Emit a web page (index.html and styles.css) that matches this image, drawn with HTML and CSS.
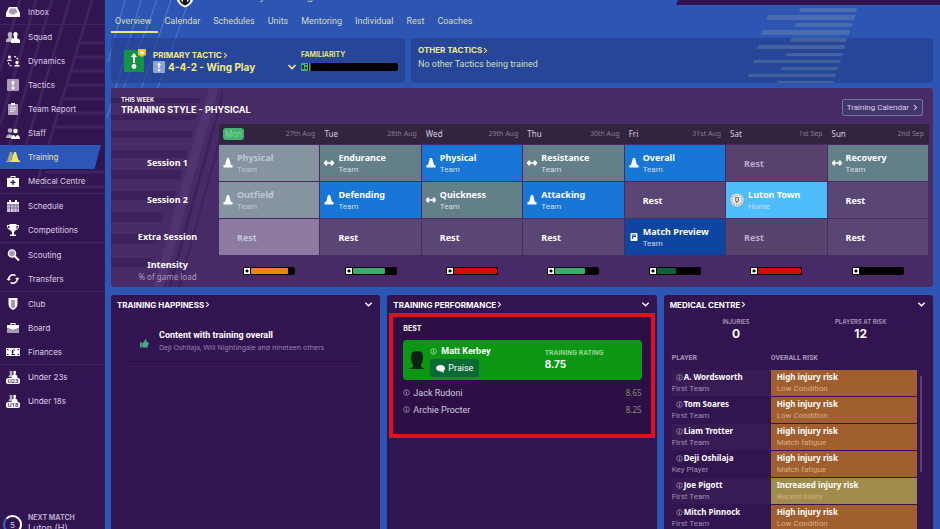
FILE: index.html
```html
<!DOCTYPE html>
<html lang="en">
<head>
<meta charset="utf-8">
<title>Training overview</title>
<link rel="stylesheet" href="styles.css">
</head>
<body>
<svg class="defs" aria-hidden="true">
  <symbol id="cone" viewBox="0 0 10 10"><path d="M4 0h2l2 7h1.500v2.500h-9V7H2z"/></symbol>
  <symbol id="bell" viewBox="0 0 10 10"><path d="M0 4.200 1 3.500 1.500 2.500h1.700v1.800h3.600V2.500h1.700L9 3.500l1 .7v1.600l-1 .7-.5 1H6.800V5.700H3.200v1.800H1.500L1 6.500 0 5.800z"/></symbol>
  <symbol id="note" viewBox="0 0 10 10"><path fill-rule="evenodd" d="M2.500 1h5q1 0 1 1v6q0 1-1 1h-5q-1 0-1-1V2q0-1 1-1zM3 2.500v1h4v-1zM3 4v3h1V5h3V4z"/></symbol>
  <symbol id="info" viewBox="0 0 10 10"><circle cx="5" cy="5" r="4" fill="none" stroke="currentColor" stroke-width="1.300"/><path d="M4.200 2h1.600v1.300H4.200zM4.200 4h1.600v4H4.200z"/></symbol>
  <symbol id="down" viewBox="0 0 10 10"><path d="M1.500 3 5 6.500 8.500 3" fill="none" stroke="currentColor" stroke-width="1.600"/></symbol>
  <symbol id="right" viewBox="0 0 6 10"><path d="M1 1.500 4.500 5 1 8.500" fill="none" stroke="currentColor" stroke-width="1.500"/></symbol>
  <symbol id="people" viewBox="0 0 14 12"><path opacity=".65" d="M4 1c2 0 2.500 1.500 2 3.500L5.500 6 7 7v4H0V9c0-1 2-1.500 2.500-2V6C1 4 1.500 1 4 1z"/><path d="M9.500 1c2 0 2.500 2 2 3.500L11 6v1c.5.500 3 1 3 2.500V12H5V9.500C5 8 7.500 7.500 8 7V6L7.500 4.500C7 3 7.500 1 9.500 1z"/></symbol>
</svg>
<div class="app">
  <aside class="sidebar">
    <svg class="lines" viewBox="0 0 104 260" preserveAspectRatio="none" aria-hidden="true">
      <path d="M20 0 0 70M36 0 0 125M52 0 5 160M70 0 20 165M92 0 38 180M79 43h25M75 57h29M70 71h34M66 85h38M60 99h44M56 113h48M52 127h52M45 172h59M40 187h64"/>
    </svg>
    <nav>
      <ul>
        <li><a href="#"><svg viewBox="0 0 14 12"><path d="M3 1h8l3 6v4H0V7z"/><path fill="#a898b8" d="M4 2.500h6l1.500 4.500h-2L9 8.500H5L4.500 7h-2z"/></svg>Inbox</a></li>
      </ul>
      <ul>
        <li><a href="#"><svg viewBox="0 0 14 12"><use href="#people"/></svg>Squad</a></li>
        <li><a href="#"><svg viewBox="0 0 14 12"><circle cx="3.500" cy="2" r="1.600"/><path d="M1 6c0-2 5-2 5 0zM8 11.500c0-2.500 6-2.500 6 0z"/><circle cx="11" cy="7.500" r="1.700"/><path d="M8 1.500q3.500.5 3.500 3M2.500 7.500q.5 3.500 4 3.500" fill="none" stroke="#fff" stroke-width="1.200" stroke-dasharray="2 1"/></svg>Dynamics</a></li>
        <li><a href="#"><svg viewBox="0 0 14 12"><rect x="1" y="0" width="12" height="12" rx="1" fill="#ab9cb9"/><path d="M7 1.500 9 4H7.700v2.500H6.300V4H5z"/><circle cx="7" cy="9" r="1.400"/></svg>Tactics</a></li>
        <li><a href="#"><svg viewBox="0 0 14 12"><path fill="#ab9cb9" d="M2 1h10v11H2z"/><path d="M5 0h4v2H5z"/><path d="M4 4.500h6M4 6.500h6M4 8.500h4" stroke="#eee" stroke-width=".8"/></svg>Team Report</a></li>
        <li><a href="#"><svg viewBox="0 0 14 12"><g opacity=".65"><circle cx="4" cy="3.500" r="2.300"/><path d="M0 11c0-5 7-5 7 0z"/></g><circle cx="9.500" cy="4" r="2.300"/><path d="M5 12c0-2.500 1.500-4 3-4l1.500 2L11 8c1.500 0 3 1.500 3 4z"/></svg>Staff</a></li>
        <li><a class="active" href="#" aria-current="page"><svg viewBox="0 0 14 12"><path fill="#a8a67c" d="M4 1h2l1 4-3 6H0v-1h1z"/><path fill="#f4e36b" d="M8 1h2l2.500 8.500H14V11H4V9.500h1.500z"/></svg>Training</a></li>
        <li><a href="#"><svg viewBox="0 0 14 12"><path fill-rule="evenodd" d="M1 3h3.500V1h5v2H13v9H1zM5.500 3h3V2h-3zM6.300 5v1.700H4.500V8h1.800v1.800h1.500V8h1.700V6.700H7.800V5z"/></svg>Medical Centre</a></li>
      </ul>
      <ul>
        <li><a href="#"><svg viewBox="0 0 14 12"><path fill="#cfc5da" d="M1 2h12v10H1z"/><path d="M3 0h2v2h4V0h2v2h2v2H1V2h2z"/><path d="M1 5h12M1 8h12M4.500 4v8M8 4v8M11 4v8" stroke="#5a3c78" stroke-width=".6"/></svg>Schedule</a></li>
        <li><a href="#"><svg viewBox="0 0 14 12"><path d="M3.500 0h7v1H13c0 3-1 4.500-3 5L8 8v2.500h2V12H4v-1.500h2V8L4 6C2 5.500 1 4 1 1h2.500zM2 2c0 1.500.5 2.500 1.500 3V2zm10 0h-1.500v3c1-.5 1.500-1.500 1.500-3z"/></svg>Competitions</a></li>
      </ul>
      <ul>
        <li><a href="#"><svg viewBox="0 0 14 12"><circle cx="6" cy="4.500" r="3.600" fill="#a898b8" stroke="#fff" stroke-width="1.400"/><path d="m8.500 7 4.500 4.500" stroke="#fff" stroke-width="2"/></svg>Scouting</a></li>
        <li><a href="#"><svg viewBox="0 0 14 12"><path d="M3 7.500A4.300 4.300 0 0 1 9.500 2.600M11 4.500A4.300 4.300 0 0 1 4.500 9.400" fill="none" stroke="#fff" stroke-width="1.600"/><path d="M9 5h4.500L11.500 7.500zM.5 7H5L2.500 4.500z"/></svg>Transfers</a></li>
      </ul>
      <ul>
        <li><a href="#"><svg viewBox="0 0 14 12"><path d="M2.500 0h9v6c0 3-2 5-4.500 6-2.500-1-4.500-3-4.500-6z"/><path fill="#a898b8" d="M5 2h4v7L7 10.500 5 9z"/></svg>Club</a></li>
        <li><a href="#"><svg viewBox="0 0 14 12"><path fill-rule="evenodd" d="M1 3h3.500V1h5v2H13v3L7 8 1 6zM5.500 3h3V2h-3z"/><path fill="#a898b8" d="m1 6 6 2 6-2v5H1z"/></svg>Board</a></li>
        <li><a href="#"><svg viewBox="0 0 14 12"><path d="M0 2h14v8H0z"/><path d="M1 3.500h1.500M11.500 3.500H13M1 8.500h1.500M11.500 8.500H13M9 4.500Q6.500 2.500 6.500 5v2q0 1-1 1.500H9M5.500 6H8" fill="none" stroke="#3a1b58" stroke-width="1"/></svg>Finances</a></li>
      </ul>
      <ul>
        <li><a href="#"><span class="squad-icon"><svg viewBox="0 0 14 12"><use href="#people"/></svg><b>U23</b></span>Under 23s</a></li>
        <li><a href="#"><span class="squad-icon"><svg viewBox="0 0 14 12"><use href="#people"/></svg><b>U18</b></span>Under 18s</a></li>
      </ul>
    </nav>
    <a class="next" href="#">
      <span class="ring">5</span>
      <span class="next-text"><b>NEXT MATCH</b><span>Luton (H)</span></span>
    </a>
  </aside>

  <main>
    <svg class="bg-left" viewBox="0 0 90 130" aria-hidden="true"><path d="M20 0 3 62M36 0 2 118M52 0 18 90M66 0 36 90M84 0 52 90"/></svg>
    <svg class="bg-right" viewBox="0 0 112 80" aria-hidden="true"><path d="M53 0h57l-1 4H52zM21 7h88l-2 5H19zM49 15h57l-2 4H48zM16 22h87l-1 5H14zM44 30h56l-1 4H43zM12 37h86l-1 4H10zM40 45h56l-1 3H39zM7 52h87l-1 3H6zM35 59h56l-1 3H34zM2 66h87l-1 3H1zM31 73h56v2H30z"/></svg>
    <header class="club">
      <svg class="crest" viewBox="0 0 18 8" aria-hidden="true"><path fill="#fff" d="M1 0h16q-1 5-8 7.500Q2 5 1 0z"/><path fill="#161419" d="M3.500 0h11q-1 3.500-5.500 5.500Q4.500 3.500 3.500 0z"/><path fill="#fff" d="m5 0 2 2.500V0zM13 0l-2 2.500V0z"/></svg>
      <span class="league">Sky Bet League One</span>
      <span class="top-strip"></span>
    </header>
    <nav class="tabs">
      <a class="on" href="#" aria-current="page">Overview</a><a href="#">Calendar</a><a href="#">Schedules</a><a href="#">Units</a><a href="#">Mentoring</a><a href="#">Individual</a><a href="#">Rest</a><a href="#">Coaches</a>
    </nav>

    <div class="tactics">
      <section class="card primary">
        <svg class="tactic-icon" viewBox="0 0 24 24" aria-hidden="true"><path fill="#129348" d="M1 2h20v22H1z"/><path fill="#fff" d="M11 5 14 9h-2v6h-2V9H8z"/><circle cx="11" cy="18.500" r="2.400" fill="#fff"/><path fill="#e8b93c" d="M15 1h8v6l-4 2-4-2z"/><path fill="#fff8cf" d="m19 2 .8 1.500 1.700.2-1.200 1.200.3 1.700L19 5.800l-1.600.8.300-1.700-1.200-1.200 1.700-.2z"/></svg>
        <div class="tactic">
          <h2><a href="#">PRIMARY TACTIC <svg class="chev"><use href="#right"/></svg></a></h2>
          <button class="tactic-pick" type="button">
            <svg class="mini" viewBox="0 0 12 12"><rect width="12" height="12" rx="1" fill="#8fa3d9"/><path fill="#fff" d="M6 1.500 8 4H6.700v3H5.300V4H4z"/><circle cx="6" cy="9.300" r="1.300" fill="#fff"/></svg>
            <span>4-4-2 - Wing Play</span>
            <svg class="drop"><use href="#down"/></svg>
          </button>
        </div>
        <div class="familiarity">
          <h3>FAMILIARITY</h3>
          <div class="meter"><svg viewBox="0 0 10 8"><path fill="#48b079" d="M0 0h7v8H0zM8 0h1.500v8H8z"/><path d="M1 2h2v4H1zM4 4h2v2H4zM4 1h2v1H4z" fill="#0b3321"/></svg></div>
        </div>
      </section>
      <section class="card other">
        <h2><a href="#">OTHER TACTICS <svg class="chev"><use href="#right"/></svg></a></h2>
        <p>No other Tactics being trained</p>
      </section>
    </div>

    <section class="week">
      <svg class="bg-week" viewBox="0 0 112 200" aria-hidden="true"><path class="beam" d="M98 0h9L52 200H42z"/><path class="hair" d="M112 0h3L60 200h-3zM122 0h2L69 200h-2z"/><path class="hair" d="M0 10h90l-2 5H0zM0 27h86l-2 5H0zM0 43h82l-2 7H0zM0 62h77l-2 8H0zM0 82h71l-2 9H0zM0 103h65l-3 9H0zM0 124h53l-3 10H0zM0 146h48l-3 10H0zM0 170h41l-3 9H0z"/></svg>
      <div class="week-head">
        <div><small>THIS WEEK</small><h1>TRAINING STYLE - PHYSICAL</h1></div>
        <button class="cal" type="button">Training Calendar <svg class="chev"><use href="#right"/></svg></button>
      </div>
      <table class="plan">
        <thead>
          <tr><td></td>
            <th scope="col"><div><span class="today">Mon</span><i>27th Aug</i></div></th>
            <th scope="col"><div><span>Tue</span><i>28th Aug</i></div></th>
            <th scope="col"><div><span>Wed</span><i>29th Aug</i></div></th>
            <th scope="col"><div><span>Thu</span><i>30th Aug</i></div></th>
            <th scope="col"><div><span>Fri</span><i>31st Aug</i></div></th>
            <th scope="col"><div><span>Sat</span><i>1st Sep</i></div></th>
            <th scope="col"><div><span>Sun</span><i>2nd Sep</i></div></th></tr>
        </thead>
        <tbody>
          <tr><th scope="row">Session 1</th>
            <td class="past"><div><svg><use href="#cone"/></svg><p><b>Physical</b>Team</p></div></td>
            <td class="gym"><div><svg><use href="#bell"/></svg><p><b>Endurance</b>Team</p></div></td>
            <td class="pitch"><div><svg><use href="#cone"/></svg><p><b>Physical</b>Team</p></div></td>
            <td class="gym"><div><svg><use href="#bell"/></svg><p><b>Resistance</b>Team</p></div></td>
            <td class="pitch"><div><svg><use href="#cone"/></svg><p><b>Overall</b>Team</p></div></td>
            <td class="rest dim"><div><b>Rest</b></div></td>
            <td class="gym"><div><svg><use href="#bell"/></svg><p><b>Recovery</b>Team</p></div></td></tr>
          <tr><th scope="row">Session 2</th>
            <td class="past"><div><svg><use href="#cone"/></svg><p><b>Outfield</b>Team</p></div></td>
            <td class="pitch"><div><svg><use href="#cone"/></svg><p><b>Defending</b>Team</p></div></td>
            <td class="gym"><div><svg><use href="#bell"/></svg><p><b>Quickness</b>Team</p></div></td>
            <td class="pitch"><div><svg><use href="#cone"/></svg><p><b>Attacking</b>Team</p></div></td>
            <td class="rest"><div><b>Rest</b></div></td>
            <td class="match"><div><svg viewBox="0 0 14 14"><circle cx="7" cy="7" r="6.500" fill="#e9edf0"/><circle cx="7" cy="7" r="5" fill="none" stroke="#c0a69b" stroke-width="1.500" stroke-dasharray="1.500 1"/><path d="M5 4h4v4L7 10.500 5 8z" fill="#7c7f92"/><path d="M6 5h2v3H6z" fill="#e6c6a1"/></svg><p><b>Luton Town</b>Home</p></div></td>
            <td class="rest"><div><b>Rest</b></div></td></tr>
          <tr><th scope="row">Extra Session</th>
            <td class="rest past-rest"><div><b>Rest</b></div></td>
            <td class="rest"><div><b>Rest</b></div></td>
            <td class="rest"><div><b>Rest</b></div></td>
            <td class="rest"><div><b>Rest</b></div></td>
            <td class="preview"><div><svg><use href="#note"/></svg><p><b>Match Preview</b>Team</p></div></td>
            <td class="rest dim"><div><b>Rest</b></div></td>
            <td class="rest"><div><b>Rest</b></div></td></tr>
        </tbody>
        <tfoot>
          <tr><th scope="row">Intensity<small>% of game load</small></th>
            <td><span class="load"><i></i><span class="orange" style="width:73%"></span></span></td>
            <td><span class="load"><i></i><span class="green" style="width:65%"></span></span></td>
            <td><span class="load"><i></i><span class="red" style="width:95%"></span></span></td>
            <td><span class="load"><i></i><span class="green" style="width:60%"></span></span></td>
            <td><span class="load"><i></i><span class="forest" style="width:39%"></span></span></td>
            <td><span class="load"><i></i><span class="red" style="width:100%"></span></span></td>
            <td><span class="load"><i></i></span></td></tr>
        </tfoot>
      </table>
    </section>

    <div class="panels">
      <section class="panel">
        <header><h2><a href="#">TRAINING HAPPINESS <svg class="chev"><use href="#right"/></svg></a></h2><button type="button" aria-label="Training happiness options"><svg><use href="#down"/></svg></button></header>
        <div class="mood">
          <svg viewBox="0 0 10 10" aria-hidden="true"><path d="M0 4h2v5.500H0zM2.500 4.500 4.500 3 6 0l1.500.8L7 3.500h2.500L10 5.500 9 6.500 8.500 9.500H4L2.500 9z"/></svg>
          <p><b>Content with training overall</b>Deji Oshilaja, Will Nightingale and nineteen others</p>
        </div>
      </section>
      <section class="panel">
        <header><h2><a href="#">TRAINING PERFORMANCE <svg class="chev"><use href="#right"/></svg></a></h2><button type="button" aria-label="Training performance options"><svg><use href="#down"/></svg></button></header>
        <div class="marked">
          <h3>BEST</h3>
          <div class="best">
            <svg class="face" viewBox="0 0 16 20" aria-hidden="true"><path d="M8 1c4 0 6 2 6 6 0 4-1 6-2 8v2l4 2H0l4-2v-2C3 13 2 11 2 7c0-4 2-6 6-6z"/></svg>
            <div class="who"><p><svg class="info"><use href="#info"/></svg><b>Matt Kerbey</b></p>
              <button type="button"><svg viewBox="0 0 10 10"><path d="M5 1c3 0 5 1.500 5 3.500S8.500 8 8 8l1 2-4-2C2 8 0 6.500 0 4.500S2 1 5 1z"/></svg>Praise</button></div>
            <div class="rating"><small>TRAINING RATING</small><b>8.75</b></div>
          </div>
          <ul class="others">
            <li><svg class="info"><use href="#info"/></svg><span>Jack Rudoni</span><em>8.65</em></li>
            <li><svg class="info"><use href="#info"/></svg><span>Archie Procter</span><em>8.25</em></li>
          </ul>
        </div>
      </section>
      <section class="panel">
        <header><h2><a href="#">MEDICAL CENTRE <svg class="chev"><use href="#right"/></svg></a></h2><button type="button" aria-label="Medical centre options"><svg><use href="#down"/></svg></button></header>
        <div class="totals"><p>INJURIES<b>0</b></p><p>PLAYERS AT RISK<b>12</b></p></div>
        <div class="scroller">
          <table class="risk">
            <thead><tr><th scope="col">PLAYER</th><th scope="col">OVERALL RISK</th></tr></thead>
            <tbody>
              <tr><td><p><svg class="info"><use href="#info"/></svg><b>A. Wordsworth</b></p>First Team</td><td class="high"><b>High injury risk</b>Low Condition</td></tr>
              <tr><td><p><svg class="info"><use href="#info"/></svg><b>Tom Soares</b></p>First Team</td><td class="high"><b>High injury risk</b>Low Condition</td></tr>
              <tr><td><p><svg class="info"><use href="#info"/></svg><b>Liam Trotter</b></p>First Team</td><td class="high"><b>High injury risk</b>Match fatigue</td></tr>
              <tr><td><p><svg class="info"><use href="#info"/></svg><b>Deji Oshilaja</b></p>Key Player</td><td class="high"><b>High injury risk</b>Match fatigue</td></tr>
              <tr><td><p><svg class="info"><use href="#info"/></svg><b>Joe Pigott</b></p>First Team</td><td class="raised"><b>Increased injury risk</b>Recent injury</td></tr>
              <tr><td><p><svg class="info"><use href="#info"/></svg><b>Mitch Pinnock</b></p>First Team</td><td class="high"><b>High injury risk</b>Low Condition</td></tr>
            </tbody>
          </table>
          <span class="thumb"></span>
        </div>
      </section>
    </div>
  </main>
</div>
</body>
</html>
```
FILE: styles.css
```css
* { box-sizing: border-box; }
body { margin: 0; background: #2d55b4; color: #fff; font: 9px/12px "Noto Sans", "Open Sans", sans-serif; }
h1, h2, h3, p, ul { margin: 0; padding: 0; }
ul { list-style: none; }
a { color: inherit; text-decoration: none; }
button { margin: 0; padding: 0; border: 0; background: none; color: inherit; font: inherit; cursor: pointer; }
svg { display: block; flex: none; fill: currentColor; }
i, em { font-style: normal; }
.defs { position: absolute; width: 0; height: 0; }
.app { display: flex; height: 100vh; overflow: hidden; }

.sidebar { position: relative; flex: none; width: 105px; display: flex; flex-direction: column; justify-content: space-between; background: #321450; border-right: 1px solid #1d255f; color: #d9cfe4; }
.lines { position: absolute; top: 0; left: 0; width: 100%; height: 260px; fill: none; stroke: #4a2c69; stroke-width: 3; opacity: .6; }
.sidebar nav { position: relative; }
.sidebar nav ul + ul { border-top: 1px solid #43265f; }
.sidebar nav a { display: flex; align-items: center; gap: 8px; height: 24px; padding-left: 6px; font: 8px/12px Inter, sans-serif; }
.sidebar nav svg { width: 14px; height: 12px; fill: #fff; }
.sidebar nav a.active { background: #2b58b8; color: #f0e58c; clip-path: polygon(0 0, 97% 0, 91% 100%, 0 100%); }
.squad-icon { display: block; width: 14px; }
.squad-icon b { display: block; background: #fff; color: #321450; border-radius: 2px; font: 500 6px/6px Roboto, sans-serif; text-align: center; }
.sidebar nav .squad-icon svg { height: 8px; margin: 0 auto; }
.next { position: relative; display: flex; gap: 6px; height: 16px; padding-left: 3px; font: 8px/10px Inter, sans-serif; }
.ring { flex: none; width: 19px; height: 19px; margin-top: 2px; border: 2px solid #fff; border-left-color: #3a62c6; border-radius: 50%; text-align: center; line-height: 16px; }
.next-text b, .next-text span { display: block; }
.next-text b { color: #b8a9c9; font-size: 7px; }
.next-text span { font-size: 9px; line-height: 9px; }

main { position: relative; flex: 1; min-width: 0; display: flex; flex-direction: column; padding: 0 7px 0 6px; }
.bg-left { position: absolute; left: 0; top: 0; width: 90px; height: 130px; fill: none; stroke: #5b7cc0; stroke-width: 1; }
.bg-right { position: absolute; right: 81px; top: 8px; width: 112px; height: 80px; z-index: 1; color: rgba(150, 170, 170, .28); pointer-events: none; }
.club { position: relative; flex: none; height: 10px; }
.crest { position: absolute; left: 65px; top: 0; width: 18px; height: 8px; }
.league { position: absolute; left: 137px; top: -11px; color: #b9c7a4; font-size: 11px; }
.top-strip { position: absolute; right: -7px; top: 0; width: 264px; height: 5px; background: #30134f; clip-path: polygon(2px 0, 100% 0, 100% 100%, 0 100%); }
.tabs { position: relative; display: flex; flex: none; height: 23px; color: #d5dcb7; font: 9px/22px Roboto, sans-serif; }
.tabs a { padding: 0 7px 0 6px; }
.tabs a.on { border-bottom: 2px solid #f3e878; padding: 0 7px 0 4px; }
.tactics { position: relative; flex: none; display: grid; grid-template-columns: 294fr 522fr; gap: 6px; margin-top: 5px; color: #f3ea85; }
.card { background: rgba(33, 62, 135, .6); border-radius: 3px; height: 45px; }
.card h2 { font: 700 8px/10px Inter, sans-serif; }
.card h2 a, .panel h2 a { display: flex; align-items: center; gap: 1px; }
.chev { width: 5px; height: 7px; }
.primary { display: flex; padding: 10px 7px 0 12px; }
.tactic-icon { width: 24px; height: 24px; }
.tactic { flex: 1; margin: 2px 0 0 6px; }
.tactic-pick { display: flex; align-items: center; gap: 3px; width: 100%; height: 14px; font: 700 10px/14px Inter, sans-serif; }
.mini { width: 12px; height: 12px; }
.drop { width: 10px; height: 10px; margin-left: auto; }
.familiarity { width: 97px; margin: 3px 0 0 4px; }
.familiarity h3 { font: 600 7px/8px Inter, sans-serif; }
.meter { height: 8px; margin-top: 4px; background: #000; border-radius: 2px; }
.meter svg { width: 10px; height: 8px; }
.other { padding: 7px; }
.other p { margin-top: 3px; color: #d5dcb7; font: 9px/12px Roboto, sans-serif; }

.week { position: relative; flex: none; height: 199px; margin-top: 5px; padding: 0 4px 0 5px; background: #482a66; border-radius: 3px; overflow: hidden; }
.bg-week { position: absolute; left: 0; top: 0; width: 112px; height: 200px; }
.beam { fill: #563777; opacity: .7; }
.hair { fill: #372057; opacity: .7; }
.week-head { position: relative; display: flex; justify-content: space-between; height: 35px; padding: 8px 6px 0 5px; }
.week-head small { display: block; font: 600 6px/8px Inter, sans-serif; }
.week-head h1 { font: 700 9px/12px Inter, sans-serif; }
.cal { display: flex; align-items: center; gap: 4px; height: 17px; margin-top: 3px; padding: 0 4px; border: 1px solid #6678a8; border-radius: 2px; background: #43366f; color: #d9d2ea; font: 8px/15px Roboto, sans-serif; }
.plan { position: relative; width: 100%; table-layout: fixed; border-collapse: separate; border-spacing: 1px; }
.plan th, .plan td { padding: 0; }
.plan tr > :first-child { width: 101px; text-align: center; font-weight: 700; background: none; }
.plan thead th { height: 20px; background: #32233f; box-shadow: 1px 0 #32233f; font-weight: 400; }
.plan thead div { display: flex; justify-content: space-between; align-items: center; padding: 0 4px; font-size: 8px; color: #d5cde0; }
.plan thead i { font-size: 7px; color: #897b98; }
.today { background: #43b172; color: #7ddb8f; border-radius: 3px; padding: 0 2px; }
.plan tbody td { height: 36px; color: #d3dde5; font: 8px/11px Roboto, sans-serif; text-align: left; }
.plan td > div { display: flex; align-items: center; gap: 4px; padding-left: 4px; }
.plan td b { display: block; color: #fff; font: 700 9px/13px "Noto Sans", sans-serif; }
.plan td svg { width: 10px; height: 10px; color: #fff; }
.plan td.rest > div { padding-left: 18px; }
.past { background: #8693a0; }
.plan td.past, .plan td.past b, .plan td.past-rest b { color: #c0c8d2; }
.gym { background: #63808a; }
.pitch { background: #1877d6; }
.rest { background: #594674; }
.plan td.dim { background: #58436f; }
.plan td.dim b { color: #b9acc6; }
.plan td.past-rest { background: #8c7aa0; }
.preview { background: #0d45a1; }
.match { background: #4fbdf9; }
.plan td.match svg { width: 14px; height: 14px; }
.plan tfoot th, .plan tfoot td { height: 29px; }
.plan tfoot td { text-align: center; }
.plan tfoot small { display: block; color: #ab9abb; font-size: 8px; line-height: 11px; font-weight: 400; }
.load { display: inline-flex; width: 52px; height: 8px; padding: 1px; background: #000; border-radius: 2px; vertical-align: middle; }
.load i { flex: none; width: 6px; height: 6px; background: radial-gradient(circle, #000 1px, #fff 2px); margin-right: 1px; }
.load > span { max-width: 43px; border-radius: 1px; }
.orange { background: #f4821c; }
.green { background: #3eab71; }
.red { background: #d50c10; }
.forest { background: #10603b; }

.panels { position: relative; flex: 1; min-height: 0; display: grid; grid-template-columns: repeat(3, minmax(0, 1fr)); gap: 7px; margin-top: 8px; }
.panel { background: #321450; border-radius: 3px 3px 0 0; overflow: hidden; }
.panel > header { display: flex; justify-content: space-between; align-items: center; height: 19px; padding: 0 7px 0 6px; }
.panel h2 { font: 700 8px/10px Inter, sans-serif; }
.panel header button svg { width: 9px; height: 9px; }
.info { width: 7px; height: 7px; color: #8f7da3; }
.mood { display: flex; align-items: center; gap: 10px; margin: 9px 16px 0; padding: 6px 0 13px 13px; border-bottom: 1px solid #3c1d58; font: 7px/11px "Noto Sans", sans-serif; color: #9a84b0; }
.mood svg { width: 9px; height: 9px; margin-top: 4px; color: #48ac87; }
.mood b { display: block; color: #fff; font: 700 9px/13px Roboto, sans-serif; }
.marked { margin: -1px 2px 0; padding: 7px 9px 16px 10px; border: 4px solid #df101a; background: #2d0f45; font: 9px/12px Roboto, sans-serif; }
.marked h3 { font: 700 7px/10px Inter, sans-serif; }
.best { display: flex; align-items: center; height: 40px; margin-top: 6px; padding: 0 6px; border-radius: 4px; background: #0b9714; }
.face { width: 16px; height: 20px; color: #0c2213; }
.who { flex: 1; padding-left: 5px; }
.who p { display: flex; align-items: center; gap: 4px; height: 16px; }
.best .info { color: #9bd495; }
.who button { display: flex; align-items: center; gap: 3px; height: 18px; padding: 0 6px; border-radius: 2px; background: #086a35; }
.who button svg { width: 9px; height: 9px; }
.rating { width: 91px; }
.rating small { display: block; color: #93d38f; font: 700 7px/9px Roboto, sans-serif; }
.rating b { font: 700 10px/12px Inter, sans-serif; }
.others { margin-top: 4px; }
.others li { display: flex; align-items: center; gap: 3px; height: 17px; color: #d4c9e0; }
.others em { margin-left: auto; color: #8a8b6c; font: 8px/12px "Noto Sans", sans-serif; }
.totals { display: grid; grid-template-columns: 1fr 1fr; padding: 4px 10px 0; text-align: center; color: #a796b8; font: 600 6px/8px Inter, sans-serif; }
.totals b { display: block; color: #fff; font: 700 12px/16px Inter, sans-serif; }
.scroller { position: relative; padding: 10px 16px 0 8px; }
.risk { width: 100%; table-layout: fixed; border-collapse: separate; border-spacing: 0 1px; }
.risk th { padding: 0 0 6px; text-align: left; color: #a796b8; font: 700 7px/10px Roboto, sans-serif; }
.risk th:first-child { width: 99px; }
.risk td { height: 26px; padding: 0; color: #a08fb3; font: 8px/12px Roboto, sans-serif; }
.risk td p { display: flex; align-items: center; gap: 1px; padding-left: 4px; }
.risk b { display: block; color: #fff; font: 700 8px/12px "Noto Sans", sans-serif; }
.risk td:last-child { padding-left: 6px; color: #dcae80; }
.risk tr:nth-child(odd) td:first-child { background: #381b55; }
.risk .high { background: #9f5f2e; }
.risk .raised { background: #9f8c4c; }
.thumb { position: absolute; right: 11px; top: 34px; width: 2px; height: 96px; background: #5b4275; border-radius: 1px; }
```
